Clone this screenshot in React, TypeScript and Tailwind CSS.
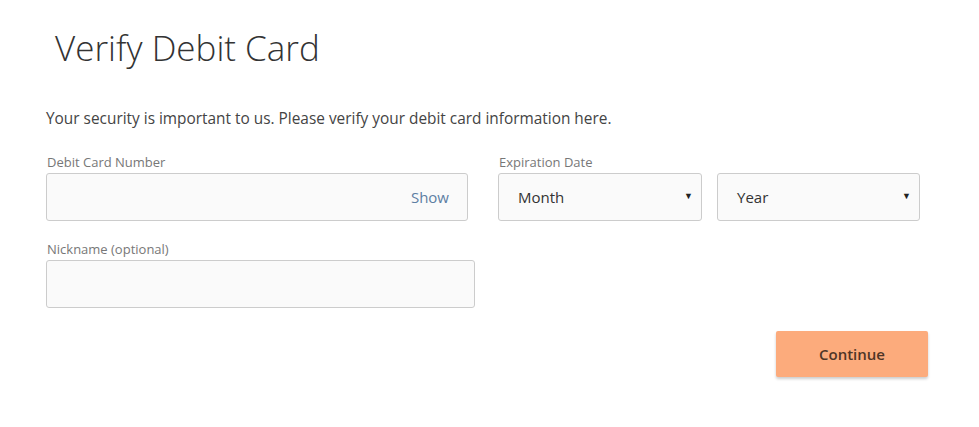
export default function App() {
  const font = "font-['Open_Sans',sans-serif]";
  return (
    <div className={`${font} bg-white w-[979px] h-[427px] pl-[46px] pr-[51px] pt-[24px] text-[#333]`}>
      <h1 className="ml-[9px] text-[35px] font-light leading-[48px] text-[#333]">Verify Debit Card</h1>

      <p className="mt-[37px] text-[15.4px] leading-[20px] text-[#444]">
        Your security is important to us. Please verify your debit card information here.
      </p>

      <div className="mt-[24px] flex">
        <div className="w-[422px]">
          <label className="block text-[13px] leading-[18px] text-[#777] pl-[1px]">Debit Card Number</label>
          <div className="mt-[2px] h-[48px] border border-[#ccc] rounded-[3px] bg-[#fafafa] flex items-center justify-end pr-[18px]">
            <span className="text-[15px] text-[#5d7ea3]">Show</span>
          </div>
        </div>
        <div className="ml-[30px]">
          <label className="block text-[13px] leading-[18px] text-[#777] pl-[1px]">Expiration Date</label>
          <div className="mt-[2px] flex gap-[15px]">
            <div className="w-[204px] h-[48px] border border-[#ccc] rounded-[3px] bg-[#fafafa] flex items-center justify-between pl-[19px] pr-[8px]">
              <span className="text-[15px] text-[#333]">Month</span>
              <span className="text-[9px] text-[#222] -mt-[3px]">▼</span>
            </div>
            <div className="w-[203px] h-[48px] border border-[#ccc] rounded-[3px] bg-[#fafafa] flex items-center justify-between pl-[19px] pr-[8px]">
              <span className="text-[15px] text-[#333]">Year</span>
              <span className="text-[9px] text-[#222] -mt-[3px]">▼</span>
            </div>
          </div>
        </div>
      </div>

      <div className="mt-[19px] w-[429px]">
        <label className="block text-[13px] leading-[18px] text-[#777] pl-[1px]">Nickname (optional)</label>
        <div className="mt-[2px] h-[48px] border border-[#ccc] rounded-[3px] bg-[#fafafa]" />
      </div>

      <div className="mt-[23px] flex justify-end">
        <button className="w-[152px] h-[46px] rounded-[2px] bg-[#fcab7c] text-[15px] font-semibold text-[#4f3526] shadow-[0_2px_3px_rgba(0,0,0,0.2)]">
          Continue
        </button>
      </div>
    </div>
  );
}
